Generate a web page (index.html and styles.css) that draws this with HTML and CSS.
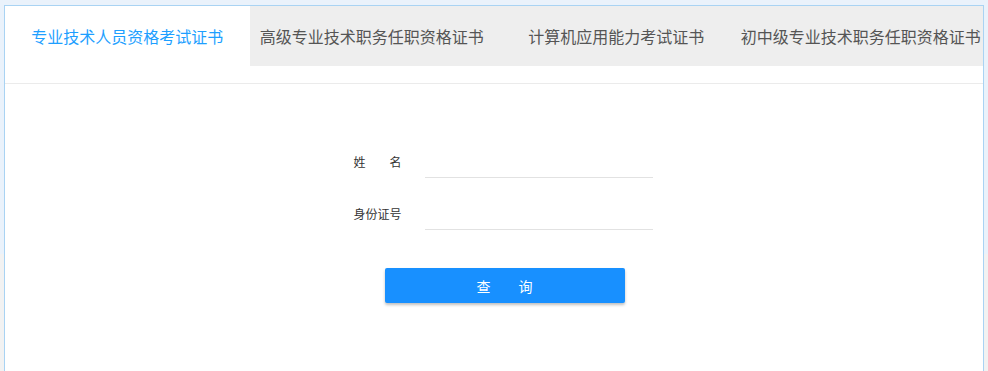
FILE: index.html
```html
<!DOCTYPE html>
<html>
<head>
    <meta charset="utf-8">
    <title>证书查询</title>
    <link rel="stylesheet" href="styles.css">
</head>
<body>
    <div class="query-container">
        <ul class="tab-title">
            <li class="tab-this">专业技术人员资格考试证书</li>
            <li>高级专业技术职务任职资格证书</li>
            <li>计算机应用能力考试证书</li>
            <li>初中级专业技术职务任职资格证书</li>
        </ul>
        <div class="tab-content">
            <form class="query-form">
                <div class="form-item">
                    <label for="name">姓　　名</label>
                    <input type="text" id="name" name="name">
                </div>
                <div class="form-item">
                    <label for="idcard">身份证号</label>
                    <input type="text" id="idcard" name="idcard">
                </div>
                <button type="submit">查　　询</button>
            </form>
        </div>
    </div>
</body>
</html>
```

FILE: styles.css
```css
html, body {
    height: 100%;
}
body {
    margin: 0;
    padding: 5px 4px 0;
    box-sizing: border-box;
    background: linear-gradient(to bottom, #eaf2fb 254px, #f2f2f2 254px);
    font-family: "Noto Sans CJK SC", "Liberation Sans", sans-serif;
    overflow: hidden;
}
.query-container {
    background: #fff;
    border: 1px solid #a9d3f3;
    border-bottom: none;
    height: 100%;
    box-sizing: border-box;
}
.tab-title {
    display: flex;
    margin: 0;
    padding: 0;
    list-style: none;
    height: 60px;
    background: #eeeeee;
}
.tab-title li {
    flex: 1;
    display: flex;
    justify-content: center;
    align-items: center;
    font-size: 16px;
    color: #555;
    white-space: nowrap;
    overflow: hidden;
    cursor: pointer;
}
.tab-title li.tab-this {
    background: #fff;
    color: #1e9fff;
}
.tab-content {
    margin-top: 17px;
    border-top: 1px solid #ebebeb;
    padding-top: 60px;
}
.query-form {
    width: 300px;
    margin: 0 auto;
    padding-left: 19px;
}
.form-item {
    display: flex;
    align-items: center;
    margin-bottom: 18px;
}
.form-item label {
    width: 71px;
    font-size: 12px;
    color: #333;
}
.form-item input {
    width: 228px;
    height: 34px;
    border: none;
    border-bottom: 1px solid #e2e2e2;
    outline: none;
    padding: 0 6px;
    box-sizing: border-box;
    font-size: 12px;
}
button {
    display: block;
    width: 240px;
    height: 35px;
    margin: 38px 0 0 31px;
    background: #1890ff;
    color: #fff;
    border: none;
    border-radius: 2px;
    font-family: inherit;
    font-size: 14px;
    box-shadow: 0 2px 3px rgba(0,0,0,0.25);
    cursor: pointer;
}
```
